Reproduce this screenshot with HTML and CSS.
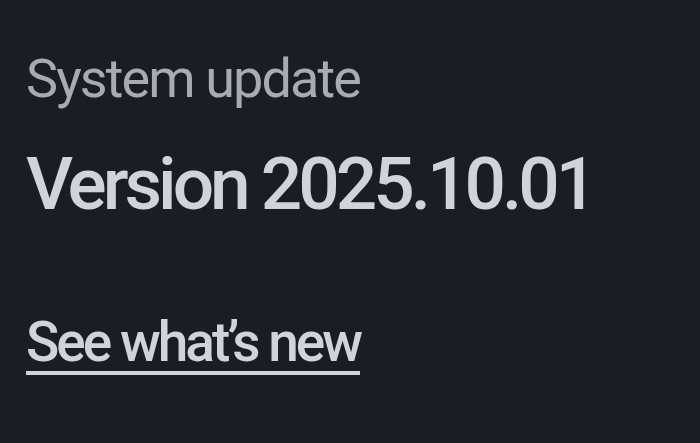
FILE: index.html
```html
<!DOCTYPE html>
<html>

<head>
	<meta charset="UTF-8">
	<title>System update</title>
	<link rel="stylesheet" href="styles.css">
</head>

<body>
	<div class="content">
		<div class="label">System update</div>
		<h1 class="version">Version 2025.10.01</h1>
		<a class="link" href="#">See what’s new</a>
	</div>
</body>

</html>
```

FILE: styles.css
```css
html,
body {
	margin: 0;
	padding: 0;
	height: 100%;
}

body {
	background: #1c1d22;
	font-family: "Roboto", "Noto Sans", sans-serif;
}

.content {
	display: flex;
	flex-direction: column;
	align-items: flex-start;
	padding: 47px 0 0 26px;
}

.label {
	color: #a9abb3;
	font-size: 54px;
	line-height: 64px;
	font-weight: 400;
	letter-spacing: -1.9px;
}

.version {
	margin: 31px 0 0 0;
	color: #d0d3dc;
	font-size: 73px;
	line-height: 84px;
	font-weight: 500;
	letter-spacing: -4px;
}

.link {
	margin-top: 84px;
	color: #d0d3dc;
	font-size: 55px;
	line-height: 64px;
	font-weight: 500;
	letter-spacing: -3px;
	text-decoration: underline;
	text-decoration-thickness: 4px;
	text-underline-offset: 10px;
}
```
